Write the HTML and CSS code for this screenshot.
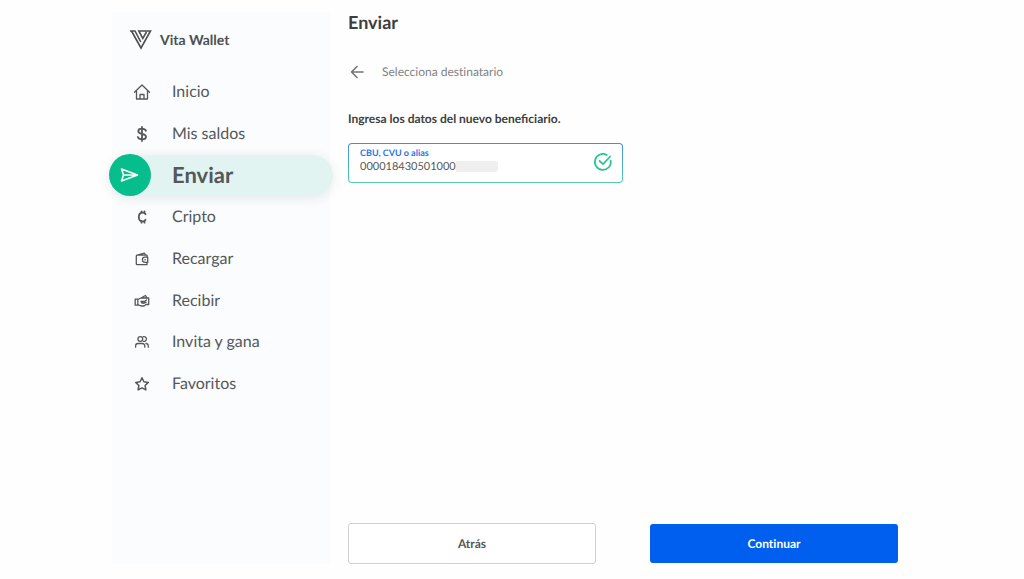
FILE: index.html
```html
<!DOCTYPE html>
<html lang="es">
<head>
<meta charset="utf-8">
<meta name="viewport" content="width=device-width, initial-scale=1">
<title>Vita Wallet</title>
<link rel="stylesheet" href="styles.css">
</head>
<body>
<div class="app">
  <aside class="sidebar">
    <div class="brand">
      <svg class="brand-logo" viewBox="0 0 22 20" aria-hidden="true"><path d="M0 1H5L10.800 12M1.500 1L11 18L20.500 1H8.800L12.800 8.300L16.500 2" fill="none" stroke="currentColor" stroke-width="1.600"/></svg>
      <span>Vita Wallet</span>
    </div>
    <nav class="menu">
      <a class="item" href="#"><span class="icon"><svg width="18" height="18" viewBox="0 0 18 18"><path d="M1.500 9.300L9 2l7.500 7.300M3.500 8v8h11V8M7 16v-4.500h4V16"/></svg></span>Inicio</a>
      <a class="item" href="#"><span class="icon"><svg class="bold" width="18" height="18" viewBox="0 0 18 18"><path d="M13 5.800C12.300 4.300 11 3.700 9 3.700c-2.300 0-3.700 1-3.700 2.500C5.300 8 7 8.500 9 8.900c2.200.4 4 1 4 2.900 0 1.600-1.500 2.600-4 2.600-2.200 0-3.600-.8-4.200-2.400M9 2v14"/></svg></span>Mis saldos</a>
      <a class="item active" href="#" aria-current="page"><span class="icon"><svg width="20" height="18" viewBox="0 0 20 18"><path d="M1.500 3L17.500 9L1.500 15L3.500 9zM3.500 9L16 9"/></svg></span>Enviar</a>
      <a class="item" href="#"><span class="icon"><svg class="bold" width="18" height="18" viewBox="0 0 18 18"><path d="M12.500 6.200C12 5.100 11 4.600 9.800 4.600C7.200 4.600 5.800 6.300 5.800 9s1.400 4.400 4 4.400c1.300 0 2.200-.5 2.700-1.600M8.500 3.300v1.500M11.500 3.300v1.500M8.500 13.200v1.500M11.500 13.200v1.500"/></svg></span>Cripto</a>
      <a class="item" href="#"><span class="icon"><svg width="18" height="18" viewBox="0 0 18 18"><path d="M14 7V5.200H4.300Q3.300 5.200 3.300 6.200V13.700Q3.300 14.700 4.300 14.700H14V12.500M5 5L11.500 3.200L12.500 5M14.700 7.200H12a2.600 2.600 0 0 0 0 5.200h2.700zM11.800 9.800h.6"/></svg></span>Recargar</a>
      <a class="item" href="#"><span class="icon"><svg width="18" height="18" viewBox="0 0 18 18"><path d="M2.200 7.200H4.800v6H2.200zM4.800 7.500L8 6h7.700v6.500H13L11 14H8L4.800 12.700M7.500 6.200L12.500 3.500L14 6M8 9.500h3.500L13.500 8M8 9.500Q8.500 11.500 11 11.200L13 10.300"/></svg></span>Recibir</a>
      <a class="item" href="#"><span class="icon"><svg width="18" height="18" viewBox="0 0 18 18"><circle cx="7.300" cy="6" r="2.400"/><path d="M10.300 3.700a2.400 2.400 0 1 1 0 4.600M2.600 14.200V13a2.500 2.500 0 0 1 2.500-2.500h4.200A2.500 2.500 0 0 1 11.800 13v1.200M13 10.500a2.400 2.400 0 0 1 2.300 2.500v1.200"/></svg></span>Invita y gana</a>
      <a class="item" href="#"><span class="icon"><svg width="18" height="18" viewBox="0 0 18 18"><path class="star" d="M9 2.800l1.900 4 4.400.6-3.200 3.100.8 4.400L9 12.800l-3.900 2.100.8-4.400-3.200-3.100 4.400-.6z"/></svg></span>Favoritos</a>
    </nav>
  </aside>

  <main class="main">
    <h1 class="title">Enviar</h1>
    <button class="back" type="button">
      <svg width="18" height="16" viewBox="0 0 18 16" aria-hidden="true"><path d="M15 8H3.500M9 2.500L3.500 8L9 13.500"/></svg>
      <span>Selecciona destinatario</span>
    </button>
    <h2 class="prompt">Ingresa los datos del nuevo beneficiario.</h2>
    <div class="field">
      <div class="field-text">
        <label class="field-label" for="account">CBU, CVU o alias</label>
        <div class="field-value">
          <input class="field-input" id="account" type="text" value="000018430501000">
          <span class="mask"></span>
        </div>
      </div>
      <svg class="check" width="20" height="20" viewBox="0 0 20 20" aria-hidden="true"><path d="M17.700 8.500A8 8 0 1 1 13.800 3M6.500 9L10 12.200L17.200 4.500"/></svg>
    </div>
    <div class="actions">
      <button class="btn btn-outline" type="button">Atrás</button>
      <button class="btn btn-primary" type="button">Continuar</button>
    </div>
  </main>
</div>
</body>
</html>
```
FILE: styles.css
```css
* {
  box-sizing: border-box;
}

body {
  margin: 0;
  background: #fefefe;
  color: #555759;
  font-family: Lato, "Noto Sans", sans-serif;
  text-rendering: geometricPrecision;
}

button,
input {
  font-family: inherit;
  font-variant-ligatures: none;
  text-rendering: inherit;
}

.app {
  display: grid;
  grid-template-columns: 218px 1fr;
  gap: 18px;
  max-width: 800px;
  min-height: 100vh;
  margin: 0 auto;
  padding: 12px 14px 15px 0;
}

.sidebar {
  background: #fafcfe;
}

.brand {
  display: flex;
  align-items: center;
  gap: 8px;
  padding: 17px 18px 0;
  color: #4e5053;
  font-size: 14px;
  font-weight: 700;
  line-height: 22px;
}

.brand-logo {
  width: 22px;
  height: 20px;
}

.menu {
  display: grid;
  grid-auto-rows: minmax(0, 1fr);
  height: 334px;
  margin-top: 20px;
}

.item {
  display: flex;
  align-items: center;
  gap: 21px;
  margin: 0 -3px;
  color: inherit;
  font-size: 16px;
  line-height: 20px;
  text-decoration: none;
}

.icon {
  display: flex;
  align-items: center;
  justify-content: flex-end;
  flex: none;
  width: 42px;
}

.icon svg,
.back svg,
.check {
  display: block;
  fill: none;
  stroke: currentColor;
  stroke-width: 1.3;
  stroke-linecap: round;
  stroke-linejoin: round;
}

.icon .bold {
  stroke-width: 1.8;
}

.icon .star {
  stroke-width: 1.5;
}

.active {
  border-radius: 21px;
  background: #e1f4f2;
  box-shadow: 0 2px 12px rgba(40, 60, 60, 0.1);
  font-size: 22px;
  font-weight: 700;
}

.active .icon {
  justify-content: center;
  height: 42px;
  border-radius: 50%;
  background: #06bd8c;
  color: #fff;
}

.active .icon svg {
  stroke-width: 1.6;
}

.main {
  display: flex;
  flex-direction: column;
  align-items: flex-start;
}

.title {
  margin: 0;
  color: #3c3e40;
  font-size: 18px;
  font-weight: 700;
  line-height: 20px;
}

.back {
  display: flex;
  align-items: center;
  gap: 16px;
  margin-top: 30px;
  padding: 0;
  border: 0;
  background: none;
  color: #808284;
  font-size: 12px;
  line-height: 20px;
}

.back svg {
  stroke: #737577;
  stroke-width: 1.6;
}

.prompt {
  margin: 27px 0 0;
  color: #3c3e40;
  font-size: 12px;
  font-weight: 700;
  line-height: 20px;
}

.field {
  display: flex;
  align-items: center;
  justify-content: space-between;
  width: 50%;
  margin-top: 14px;
  padding: 3px 9px 9px 11px;
  border: 1px solid transparent;
  border-radius: 4px;
  background:
    linear-gradient(#fff, #fff) padding-box,
    linear-gradient(#4189ee, #53cda6) border-box;
}

.field-label {
  display: block;
  color: #2c75e8;
  font-size: 9px;
  font-weight: 700;
  line-height: 12px;
}

.field-value {
  display: flex;
  align-items: center;
}

.field-input {
  width: 96px;
  height: 14px;
  padding: 0;
  border: 0;
  outline: 0;
  background: none;
  color: #555759;
  font-size: 11px;
}

.mask {
  width: 42px;
  height: 11px;
  border-radius: 0 3px 3px 0;
  background: #efefef;
}

.check {
  margin-top: 4px;
  color: #2bc48f;
  stroke-width: 1.7;
}

.actions {
  display: grid;
  grid-template-columns: 1fr 1fr;
  align-items: center;
  gap: 54px;
  width: 100%;
  margin-top: auto;
}

.btn {
  height: 41px;
  border-radius: 3px;
  font-size: 12px;
  font-weight: 700;
}

.btn-outline {
  border: 1px solid #d0d1d2;
  background: #fff;
  color: #555759;
}

.btn-primary {
  height: 39px;
  border: 0;
  background: #005fef;
  color: #fff;
}
```
